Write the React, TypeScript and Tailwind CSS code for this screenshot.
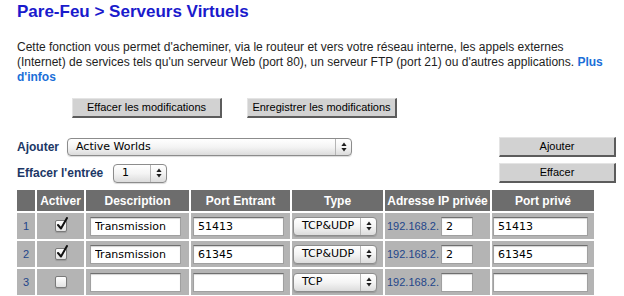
import React from "react";

const field =
  "h-[19px] border border-[#a0a0a0] border-t-[#6f6f6f] bg-white px-[4px] text-[11px] text-black outline-none shadow-[inset_0_1px_1px_rgba(0,0,0,0.18)] font-['DejaVu_Sans',sans-serif]";

function Arrows() {
  return (
    <svg width="6" height="10" viewBox="0 0 6 10">
      <path d="M3 0.5 L5.6 4 H0.4Z" fill="#1e1e1e" />
      <path d="M0.4 6 H5.6 L3 9.5Z" fill="#1e1e1e" />
    </svg>
  );
}

function MacSelect({ value, className }: { value: string; className: string }) {
  return (
    <div
      className={
        "flex items-center rounded-[4px] border border-[#8c8c8c] bg-linear-to-b from-white via-[#f4f4f4] to-[#dcdcdc] shadow-[0_1px_1px_rgba(0,0,0,0.15)] " +
        className
      }
    >
      <span className="pl-[8px] text-[11px] text-black font-['DejaVu_Sans',sans-serif]">
        {value}
      </span>
      <div className="ml-auto flex h-full w-[16px] items-center justify-center border-l border-[#b5b5b5]">
        <Arrows />
      </div>
    </div>
  );
}

function Check({ on }: { on: boolean }) {
  return (
    <div className="relative h-[12px] w-[12px] rounded-[2px] border border-[#7a7a7a] bg-linear-to-b from-white to-[#e2e2e2] shadow-[0_1px_1px_rgba(0,0,0,0.15)]">
      {on && (
        <svg
          className="absolute left-[0px] top-[-4px]"
          width="13"
          height="14"
          viewBox="0 0 13 14"
        >
          <path
            d="M2 8 L5 11.5 L11 1"
            fill="none"
            stroke="#111"
            strokeWidth="2"
            strokeLinecap="round"
            strokeLinejoin="round"
          />
        </svg>
      )}
    </div>
  );
}

function GrayButton({ label, className }: { label: string; className: string }) {
  return (
    <button
      className={
        "h-[20px] border-t border-l border-[#e4e4e4] border-r-2 border-b-2 border-r-[#5c5c5c] border-b-[#5c5c5c] bg-[#d2d2d2] text-[11px] text-black " +
        className
      }
    >
      {label}
    </button>
  );
}

interface rowType {
  id: string;
  active: boolean;
  desc: string;
  port: string;
  type: string;
  ip: string;
  priv: string;
}

export default function App() {
  const rows: rowType[] = [
    { id: "1", active: true, desc: "Transmission", port: "51413", type: "TCP&UDP", ip: "2", priv: "51413" },
    { id: "2", active: true, desc: "Transmission", port: "61345", type: "TCP&UDP", ip: "2", priv: "61345" },
    { id: "3", active: false, desc: "", port: "", type: "TCP", ip: "", priv: "" },
  ];

  const head = "flex h-[21px] items-center justify-center bg-[#6d6d6d] text-[12px] font-bold text-white";
  const cell = "flex h-[26px] items-center bg-[#b4b4b4]";

  return (
    <div className="h-[296px] w-[624px] overflow-hidden bg-white pl-[17px] font-['Liberation_Sans',Arial,sans-serif] text-[#222]">
      <h1 className="mt-[2px] text-[17px] font-bold leading-[20px] text-[#1a1acc]">
        Pare-Feu &gt; Serveurs Virtuels
      </h1>

      <p className="mt-[18px] w-[600px] text-[12px] leading-[15px] text-[#1e1e1e]">
        Cette fonction vous permet d'acheminer, via le routeur et vers votre réseau interne, les appels externes
        <br />
        (Internet) de services tels qu'un serveur Web (port 80), un serveur FTP (port 21) ou d'autres applications.{" "}
        <a className="font-bold text-[#1b6fd8]">
          Plus
          <br />
          d'infos
        </a>
      </p>

      <div className="mt-[13px] flex gap-[25px] pl-[55px]">
        <GrayButton label="Effacer les modifications" className="w-[150px]" />
        <GrayButton label="Enregistrer les modifications" className="w-[150px]" />
      </div>

      <div className="mt-[19px] flex w-[599px] items-center">
        <span className="w-[50px] text-[12px] font-bold text-[#1c3766]">Ajouter</span>
        <MacSelect value="Active Worlds" className="h-[18px] w-[285px]" />
        <GrayButton label="Ajouter" className="ml-auto w-[117px]" />
      </div>

      <div className="mt-[6px] flex w-[599px] items-center">
        <span className="w-[96px] text-[12px] font-bold text-[#1c3766]">Effacer l'entrée</span>
        <MacSelect value="1" className="h-[19px] w-[54px]" />
        <GrayButton label="Effacer" className="ml-auto w-[117px]" />
      </div>

      <div className="mt-[7px] grid w-[577px] grid-cols-[18px_47px_103px_99px_91px_105px_102px] gap-[2px]">
        <div className={head}></div>
        <div className={head}>Activer</div>
        <div className={head}>Description</div>
        <div className={head}>Port Entrant</div>
        <div className={head}>Type</div>
        <div className={head}>Adresse IP privée</div>
        <div className={head}>Port privé</div>

        {rows.map((r) => (
          <React.Fragment key={r.id}>
            <div className={cell + " pl-[6px] text-[11px] text-[#23468a]"}>{r.id}</div>
            <div className={cell + " justify-center"}>
              <Check on={r.active} />
            </div>
            <div className={cell + " pl-[4px]"}>
              <input readOnly defaultValue={r.desc} className={field + " w-[91px]"} />
            </div>
            <div className={cell + " pl-[2px]"}>
              <input readOnly defaultValue={r.port} className={field + " w-[91px]"} />
            </div>
            <div className={cell + " pl-[1px]"}>
              <MacSelect value={r.type} className="h-[19px] w-[84px]" />
            </div>
            <div className={cell + " gap-[2px] pl-[2px]"}>
              <span className="text-[11px] text-[#23468a]">192.168.2.</span>
              <input readOnly defaultValue={r.ip} className={field + " w-[32px]"} />
            </div>
            <div className={cell + " pl-[1px]"}>
              <input readOnly defaultValue={r.priv} className={field + " w-[95px]"} />
            </div>
          </React.Fragment>
        ))}
      </div>
    </div>
  );
}
